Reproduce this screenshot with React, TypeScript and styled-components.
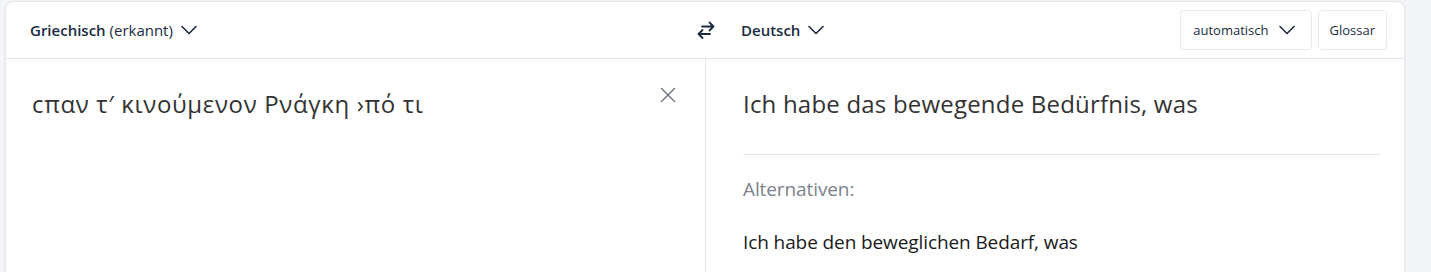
import React from "react";
import styled, { createGlobalStyle } from "styled-components";

const Global = createGlobalStyle`
  html, body { margin: 0; padding: 0; background: #f4f5f7; }
  body { font-family: "Open Sans", "Noto Sans", sans-serif; }
`;

const Page = styled.div`
  padding: 1px 26px 0 5px;
`;

const Card = styled.div`
  width: 1400px;
  box-sizing: border-box;
  background: #fff;
  border: 1px solid #e3e7ec;
  border-radius: 8px;
  box-shadow: 0 1px 3px rgba(20, 30, 50, 0.06);
`;

const Header = styled.div`
  display: flex;
  height: 56px;
  border-bottom: 1px solid #dfe4ea;
`;

const HeaderLeft = styled.div`
  width: 700px;
  box-sizing: border-box;
  display: flex;
  align-items: center;
  padding-left: 24px;
`;

const HeaderRight = styled.div`
  flex: 1;
  display: flex;
  align-items: center;
  padding-right: 17px;
`;

const LangSelect = styled.div`
  display: flex;
  align-items: center;
  gap: 8px;
  color: #1b2b41;
  font-size: 15px;
  font-weight: 600;
`;

const Detected = styled.span`
  font-weight: 400;
`;

const SwapButton = styled.div`
  display: flex;
  margin-left: -9px;
  margin-right: 26px;
  color: #1b2b41;
`;

const Spacer = styled.div`
  flex: 1;
`;

const ToolButton = styled.div<{ $padL: number; $padR: number }>`
  display: flex;
  align-items: center;
  gap: 10px;
  height: 40px;
  box-sizing: border-box;
  padding: 0 ${(p) => p.$padR}px 0 ${(p) => p.$padL}px;
  border: 1px solid #e8ebef;
  border-radius: 4px;
  font-size: 13px;
  color: #1b2b41;
  & + & {
    margin-left: 6px;
  }
`;

const Body = styled.div`
  display: flex;
  min-height: 260px;
`;

const SourcePanel = styled.div`
  width: 700px;
  box-sizing: border-box;
  display: flex;
  align-items: flex-start;
  justify-content: space-between;
  padding: 27px 29px 0 26px;
  border-right: 1px solid #dfe4ea;
`;

const BigText = styled.div<{ $spacing: number }>`
  font-size: 24px;
  line-height: 36px;
  color: #333;
  letter-spacing: ${(p) => p.$spacing}px;
`;

const ClearButton = styled.div`
  display: flex;
  margin-top: 1px;
  color: #6b7280;
`;

const TargetPanel = styled.div`
  flex: 1;
  padding: 27px 24px 0 37px;
`;

const Rule = styled.div`
  height: 1px;
  background: #dfe4ea;
  margin: 32px 0 22px;
`;

const AltLabel = styled.div`
  font-size: 19px;
  line-height: 24px;
  color: #7b828c;
  letter-spacing: -0.1px;
`;

const AltText = styled.div`
  margin-top: 28px;
  font-size: 19px;
  line-height: 26px;
  color: #1a1a1a;
  letter-spacing: -0.1px;
`;

const Chevron = () => (
  <svg width="16" height="10" viewBox="0 0 16 10" fill="none">
    <path d="M1 1.5 8 8.5 15 1.5" stroke="currentColor" strokeWidth="1.6" strokeLinecap="round" strokeLinejoin="round" />
  </svg>
);

const SwapIcon = () => (
  <svg width="18" height="20" viewBox="0 0 18 20" fill="none">
    <path d="M5 6.5H16.5M12.5 2.5l4 4-4 4" stroke="currentColor" strokeWidth="1.8" strokeLinecap="round" strokeLinejoin="round" />
    <path d="M13 14H1.5M5.5 10l-4 4 4 4" stroke="currentColor" strokeWidth="1.8" strokeLinecap="round" strokeLinejoin="round" />
  </svg>
);

const CloseIcon = () => (
  <svg width="16" height="16" viewBox="0 0 16 16" fill="none">
    <path d="M1.5 1.5l13 13M14.5 1.5l-13 13" stroke="currentColor" strokeWidth="1.4" strokeLinecap="round" />
  </svg>
);

export default function App() {
  return (
    <>
      <Global />
      <Page>
        <Card>
          <Header>
            <HeaderLeft>
              <LangSelect>
                <span>
                  Griechisch <Detected>(erkannt)</Detected>
                </span>
                <Chevron />
              </LangSelect>
            </HeaderLeft>
            <HeaderRight>
              <SwapButton>
                <SwapIcon />
              </SwapButton>
              <LangSelect>
                <span>Deutsch</span>
                <Chevron />
              </LangSelect>
              <Spacer />
              <ToolButton $padL={12} $padR={16}>
                automatisch
                <Chevron />
              </ToolButton>
              <ToolButton $padL={11} $padR={11}>
                Glossar
              </ToolButton>
            </HeaderRight>
          </Header>
          <Body>
            <SourcePanel>
              <BigText $spacing={0.65}>cπαν τ′ κινούμενον Ρνάγκη ›πό τι</BigText>
              <ClearButton>
                <CloseIcon />
              </ClearButton>
            </SourcePanel>
            <TargetPanel>
              <BigText $spacing={0.2}>Ich habe das bewegende Bedürfnis, was</BigText>
              <Rule />
              <AltLabel>Alternativen:</AltLabel>
              <AltText>Ich habe den beweglichen Bedarf, was</AltText>
            </TargetPanel>
          </Body>
        </Card>
      </Page>
    </>
  );
}
